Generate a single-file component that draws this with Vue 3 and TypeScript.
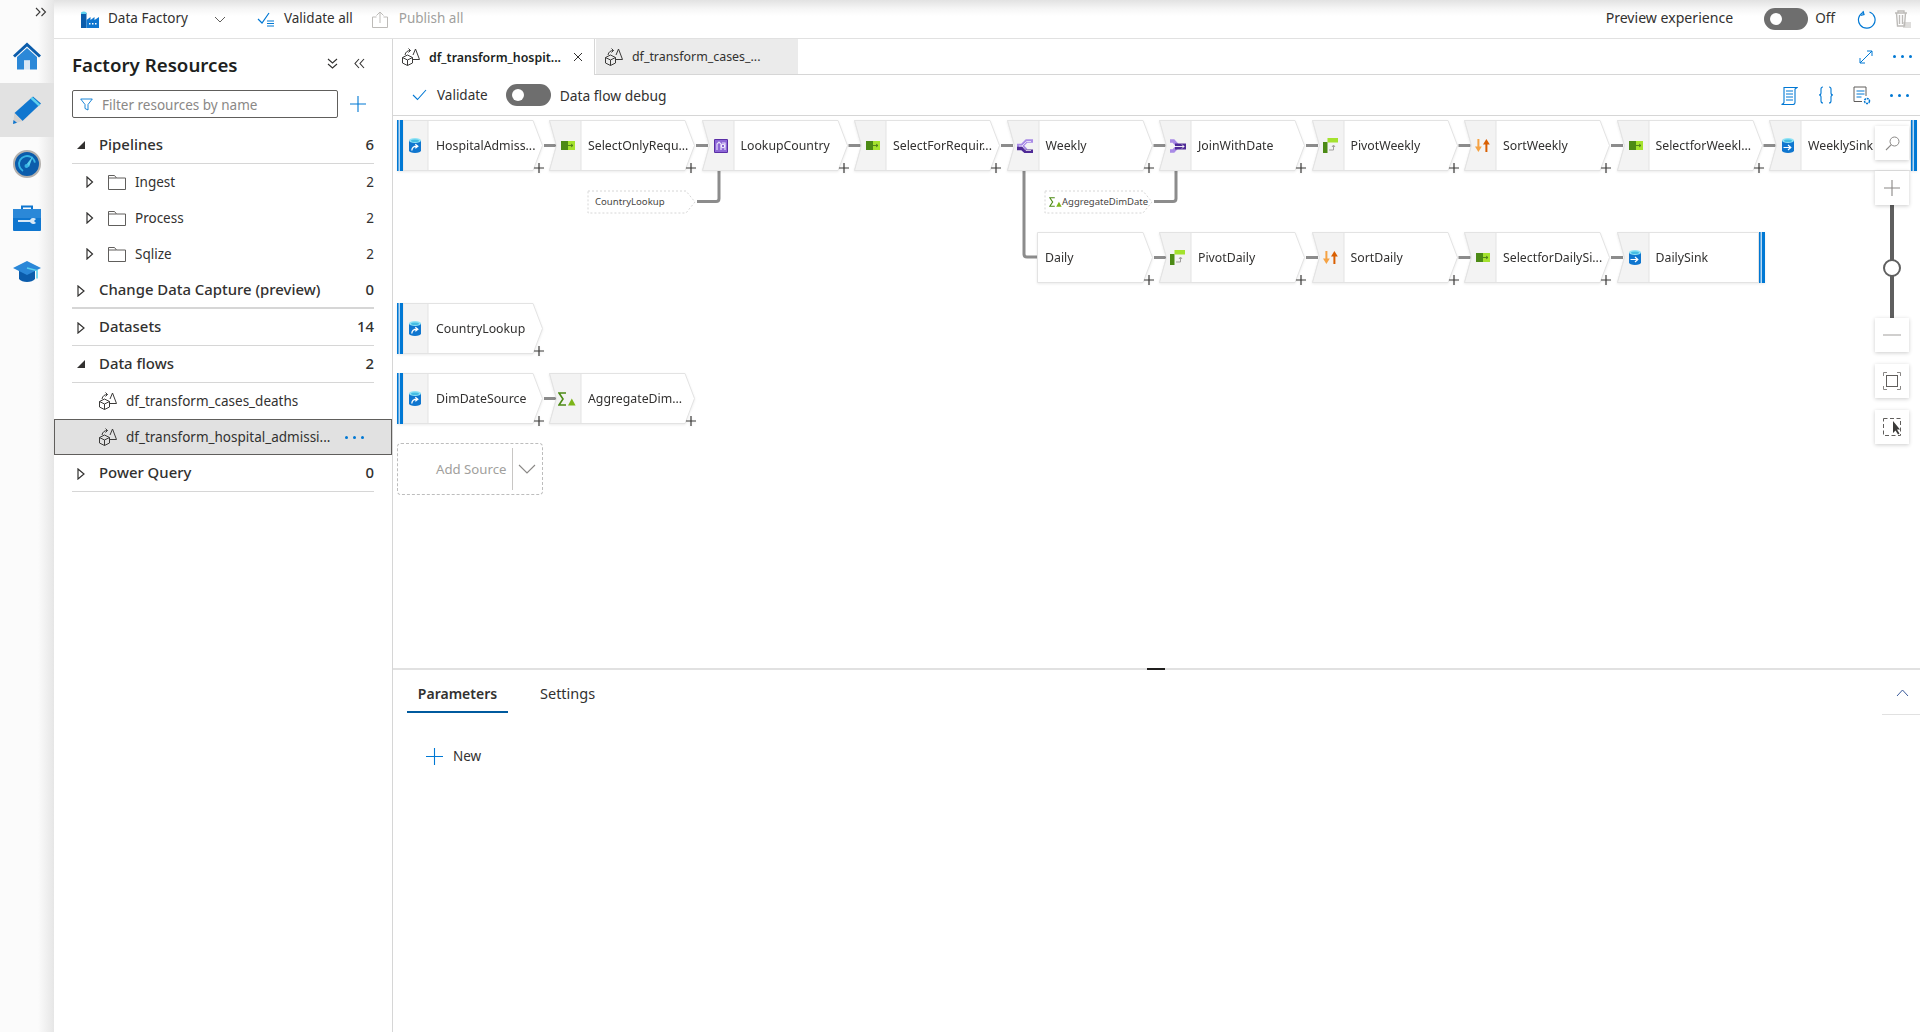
<script setup lang="ts">
type Kind = 'source' | 'step' | 'sink' | 'plain'
interface FlowNode {
  x: number
  y: number
  label: string
  icon: string
  kind: Kind
  link?: boolean
}

const ox = 393
const oy = 116
const step = 152.5

const nodes: FlowNode[] = [
  { x: 397, y: 120, label: 'HospitalAdmiss...', icon: 'i-source', kind: 'source', link: true },
  { x: 549, y: 120, label: 'SelectOnlyRequ...', icon: 'i-select', kind: 'step', link: true },
  { x: 549 + step, y: 120, label: 'LookupCountry', icon: 'i-lookup', kind: 'step', link: true },
  { x: 549 + step * 2, y: 120, label: 'SelectForRequir...', icon: 'i-select', kind: 'step', link: true },
  { x: 549 + step * 3, y: 120, label: 'Weekly', icon: 'i-branch', kind: 'step', link: true },
  { x: 549 + step * 4, y: 120, label: 'JoinWithDate', icon: 'i-join', kind: 'step', link: true },
  { x: 549 + step * 5, y: 120, label: 'PivotWeekly', icon: 'i-pivot', kind: 'step', link: true },
  { x: 549 + step * 6, y: 120, label: 'SortWeekly', icon: 'i-sort', kind: 'step', link: true },
  { x: 549 + step * 7, y: 120, label: 'SelectforWeekl...', icon: 'i-select', kind: 'step', link: true },
  { x: 549 + step * 8, y: 120, label: 'WeeklySink', icon: 'i-sink', kind: 'sink' },
  { x: 1037, y: 232, label: 'Daily', icon: '', kind: 'plain', link: true },
  { x: 549 + step * 4, y: 232, label: 'PivotDaily', icon: 'i-pivot', kind: 'step', link: true },
  { x: 549 + step * 5, y: 232, label: 'SortDaily', icon: 'i-sort', kind: 'step', link: true },
  { x: 549 + step * 6, y: 232, label: 'SelectforDailySi...', icon: 'i-select', kind: 'step', link: true },
  { x: 549 + step * 7, y: 232, label: 'DailySink', icon: 'i-sink', kind: 'sink' },
  { x: 397, y: 303, label: 'CountryLookup', icon: 'i-source', kind: 'source' },
  { x: 397, y: 373, label: 'DimDateSource', icon: 'i-source', kind: 'source', link: true },
  { x: 549, y: 373, label: 'AggregateDim...', icon: 'i-agg', kind: 'step' }
]

const iconSize: Record<string, [number, number, number]> = {
  'i-source': [12, 15, 12],
  'i-sink': [12, 15, 12.5],
  'i-select': [14, 9, 12],
  'i-lookup': [14, 14, 12],
  'i-branch': [16, 14, 10.5],
  'i-join': [16, 14, 10.5],
  'i-pivot': [15, 15, 11],
  'i-sort': [15, 13, 11],
  'i-agg': [18, 14, 9]
}

function iconStyle(n: FlowNode) {
  const [w, h, l] = iconSize[n.icon]
  return { left: `${l}px`, top: `${25.5 - h / 2}px`, width: `${w}px`, height: `${h}px` }
}

function nodeWidth(n: FlowNode): number {
  if (n.kind === 'plain') return 116
  if (n.kind === 'sink') return 142
  return 146
}

function shape(n: FlowNode): string {
  const w = nodeWidth(n)
  if (n.kind === 'sink') return `0.5,0.5 ${w - 0.5},0.5 ${w - 0.5},50.5 0.5,50.5 7.5,25.5`
  if (n.kind === 'source' || n.kind === 'plain') return `0.5,0.5 ${w - 10},0.5 ${w - 0.5},25.5 ${w - 10},50.5 0.5,50.5`
  return `0.5,0.5 ${w - 10},0.5 ${w - 0.5},25.5 ${w - 10},50.5 0.5,50.5 7.5,25.5`
}

function cell(n: FlowNode): string {
  if (n.kind === 'source') return '6,0.5 31,0.5 31,50.5 6,50.5'
  return '0.5,0.5 32,0.5 32,50.5 0.5,50.5 7.5,25.5'
}

const nodeStyle = (n: FlowNode) => ({
  left: `${n.x - ox}px`,
  top: `${n.y - oy}px`,
  width: `${nodeWidth(n) + (n.kind === 'sink' ? 6 : 0)}px`
})

const links = nodes
  .filter((n) => n.link)
  .map((n) => {
    const x = n.x - ox + nodeWidth(n) + 1
    const y = n.y - oy + 25.5
    return `M${x} ${y}H${x + 12}`
  })

const elbows = [
  'M304 85.5H323Q326 85.5 326 82.5V55',
  'M761 85.5H780Q783 85.5 783 82.5V55',
  'M631 55V138Q631 141 634 141H645'
]

const rail = ['i-home', 'i-pencil', 'i-monitor', 'i-tools', 'i-cap']

const groups = [
  { name: 'Pipelines', count: '6', open: true, kids: [
    { name: 'Ingest', count: '2' }, { name: 'Process', count: '2' }, { name: 'Sqlize', count: '2' }
  ] },
  { name: 'Change Data Capture (preview)', count: '0', open: false, kids: [], heavy: true },
  { name: 'Datasets', count: '14', open: false, kids: [] },
  { name: 'Data flows', count: '2', open: true, kids: [], flows: true },
  { name: 'Power Query', count: '0', open: false, kids: [] }
]
</script>

<template>
  <div class="page">
    <svg class="sheet" aria-hidden="true">
      <symbol id="i-flow" viewBox="0 0 18 18">
        <g fill="none" stroke="#3b3a39" stroke-width="1">
          <path d="M0.500 9.500L5.500 7l5 2.500V15l-5 2.500L0.500 15zM0.500 9.500l5 2.500 5-2.500M5.500 12v5.500" />
          <path d="M11 11.500h6.500L13.500 1 11 7" />
          <path d="M3 7C3.500 4 5.500 2.500 8.500 2.500M6.500 0.500l2 2-2 2" />
        </g>
      </symbol>
      <symbol id="i-source" viewBox="0 0 12 15">
        <path d="M0 2.500V12.500A6 2.500 0 0 0 12 12.500V2.500z" fill="#0f76cf" />
        <ellipse cx="6" cy="2.500" rx="6" ry="2.500" fill="#8fe3f5" />
        <ellipse cx="6" cy="2.700" rx="4" ry="1.300" fill="#45bde3" />
        <path d="M2.800 12.500C3 9.800 5 8.200 8 8.200M6.300 6.200L8.800 8.200 6.300 10.200" fill="none" stroke="#fff" stroke-width="1.300" />
      </symbol>
      <symbol id="i-sink" viewBox="0 0 12 15">
        <path d="M0 2.500V12.500A6 2.500 0 0 0 12 12.500V2.500z" fill="#0f76cf" />
        <ellipse cx="6" cy="2.500" rx="6" ry="2.500" fill="#8fe3f5" />
        <ellipse cx="6" cy="2.700" rx="4" ry="1.300" fill="#45bde3" />
        <path d="M1.500 9.500h7M6 7l2.800 2.500L6 12" fill="none" stroke="#fff" stroke-width="1.200" />
      </symbol>
      <symbol id="i-select" viewBox="0 0 14 9">
        <rect width="7" height="9" fill="#4c8a15" />
        <rect x="7" width="7" height="9" fill="#a4e22e" />
        <path d="M7 4.500h5M10 3l2 1.500-2 1.500" fill="none" stroke="#4c7a1a" stroke-width="0.900" />
      </symbol>
      <symbol id="i-lookup" viewBox="0 0 14 14">
        <rect width="14" height="14" rx="1" fill="#5a2ea6" />
        <rect x="1" y="1" width="12" height="12" fill="#8d67d6" />
        <path d="M3 11V5l2-2 2 2v6M8 4h3v7" fill="none" stroke="#e7defa" stroke-width="1.200" />
        <circle cx="9" cy="7" r="1.800" fill="none" stroke="#fff" stroke-width="0.900" />
      </symbol>
      <symbol id="i-branch" viewBox="0 0 16 14">
        <g fill="none" stroke-width="3.600">
          <path d="M0 6.500H5L9.500 2H16" stroke="#a98be6" />
          <path d="M5 7L9 11" stroke="#a98be6" />
          <path d="M0 9.500H5L8 12.200H16" stroke="#4f2a96" />
        </g>
        <path d="M2 7h3L9.500 2.500H14M5 7L9 11.500H14" fill="none" stroke="#fff" stroke-width="0.700" />
      </symbol>
      <symbol id="i-join" viewBox="0 0 16 14">
        <g fill="none" stroke="#a98be6" stroke-width="3.600">
          <path d="M0 2H3.500L8 7" />
          <path d="M0 12H3.500L8 7" />
        </g>
        <path d="M5 4.500h11v6H5z" fill="#4f2a96" />
        <path d="M4 7.500h10M12 5.500l2 2-2 2" fill="none" stroke="#fff" stroke-width="0.900" />
      </symbol>
      <symbol id="i-pivot" viewBox="0 0 15 15">
        <rect x="0" y="4" width="4.500" height="11" fill="#4c8a15" />
        <rect x="4.500" y="0" width="10.500" height="4.500" fill="#a4e22e" />
        <path d="M6 12h4.500V7.500M9 9l1.500-2 1.500 2" fill="none" stroke="#a19f9d" stroke-width="1" />
      </symbol>
      <symbol id="i-sort" viewBox="0 0 15 13">
        <path d="M3.400 0v9" fill="none" stroke="#f5a243" stroke-width="2" />
        <path d="M0 7.500h6.800L3.400 13z" fill="#f5a243" />
        <path d="M11.400 13V4" fill="none" stroke="#d95f02" stroke-width="2" />
        <path d="M8 5.500h6.800L11.400 0z" fill="#d95f02" />
      </symbol>
      <symbol id="i-agg" viewBox="0 0 18 14">
        <path d="M8 1H1l4 6-4 6h7" fill="none" stroke="#4c8a15" stroke-width="1.600" />
        <path d="M10 13.500l3.800-7 3.800 7z" fill="#7cb518" />
      </symbol>
      <symbol id="i-home" viewBox="0 0 28 27">
        <path d="M14 0L0 13l2 2L14 4l12 11 2-2z" fill="#0b5cab" />
        <path d="M4 14.500L14 5.500l10 9V27h-7v-9h-6v9H4z" fill="#2b88d8" />
        <rect x="11" y="18" width="6" height="9" fill="#d9e7f5" />
      </symbol>
      <symbol id="i-pencil" viewBox="0 0 28 28">
        <path d="M20 0.500L28 7.500 9.500 25 1.500 17z" fill="#0f76cf" />
        <path d="M17.500 2.800l8 7.400 1.800-1.800-8-7.400z" fill="#5cd0ee" />
        <path d="M1.500 17L0 28l9.500-3z" fill="#d2d0ce" />
        <path d="M0.500 24L0 28l4-1.300z" fill="#0f76cf" />
      </symbol>
      <symbol id="i-monitor" viewBox="0 0 28 28">
        <circle cx="14" cy="14" r="13" fill="#0b5cab" stroke="#b3b0ad" stroke-width="2" />
        <circle cx="14" cy="14" r="8" fill="none" stroke="#37b3e4" stroke-width="1.800" stroke-dasharray="32 20" transform="rotate(120 14 14)" />
        <path d="M13 15L20 6l-4 11z" fill="#5cd0ee" />
        <circle cx="13.500" cy="16" r="2" fill="#37b3e4" />
      </symbol>
      <symbol id="i-tools" viewBox="0 0 28 28">
        <path d="M8 6V1.500h12V6h-2V3.500h-8V6z" fill="#0f76cf" />
        <rect y="5" width="28" height="22" rx="1" fill="#0f76cf" />
        <rect y="5" width="28" height="9" fill="#2b88d8" />
        <path d="M5 16h12a4 4 0 0 1 6-1l-2 2 2 2a4 4 0 0 1-6-1H5z" fill="#d8e8f6" />
      </symbol>
      <symbol id="i-cap" viewBox="0 0 28 22">
        <path d="M6 10v8c3 4 13 4 16 0v-8z" fill="#0b5cab" />
        <path d="M14 0L0 7l14 7 14-7z" fill="#2b88d8" />
        <path d="M14 7l10 2.500v8" fill="none" stroke="#5cd0ee" stroke-width="1.600" />
      </symbol>
    </svg>

    <nav class="rail">
      <svg class="expand" viewBox="0 0 12 10" width="12" height="10">
        <path d="M1 1l4 4-4 4M6.500 1l4 4-4 4" fill="none" stroke="#3b3a39" stroke-width="1.100" />
      </svg>
      <div v-for="(r, i) in rail" :key="r" class="rail-item" :class="{ on: i === 1 }">
        <svg width="28" height="28"><use :href="'#' + r" /></svg>
      </div>
    </nav>

    <div class="main">
      <header class="topbar">
        <svg class="tb-ic" width="18" height="17" viewBox="0 0 18 17">
          <path d="M0 2h5.500v15H0z" fill="#0b5cab" />
          <path d="M0 1.500q2.700-2 5.500 0V3H0z" fill="#5cd0ee" />
          <path d="M5.500 9l4-3v3l4-3v3l4.500-3v11H5.500z" fill="#0f76cf" />
          <path d="M8 12h1.500v1.500H8zM11 12h1.500v1.500H11zM14 12h1.500v1.500H14z" fill="#fff" />
        </svg>
        <span class="tb-text df">Data Factory</span>
        <svg class="tb-chev" width="12" height="7" viewBox="0 0 12 7"><path d="M1 1l5 5 5-5" fill="none" stroke="#605e5c" /></svg>
        <svg class="tb-val" width="18" height="15" viewBox="0 0 18 15">
          <path d="M1 7l4 4 7-10" fill="none" stroke="#0078d4" stroke-width="1.200" />
          <path d="M10 9h7M10 11.500h7M10 14h7" stroke="#0078d4" stroke-width="1.200" />
        </svg>
        <span class="tb-text va">Validate all</span>
        <svg class="tb-pub" width="16" height="17" viewBox="0 0 16 17">
          <path d="M4.500 6H.5v10.500h15V6h-4M8 12V1M4.500 4.500L8 1l3.500 3.500" fill="none" stroke="#bdbbb8" />
        </svg>
        <span class="tb-text muted">Publish all</span>
        <span class="spacer"></span>
        <span class="tb-text pv">Preview experience</span>
        <span class="toggle wide"><i></i></span>
        <span class="tb-text off">Off</span>
        <svg class="tb-ref" width="19" height="19" viewBox="0 0 19 19">
          <path d="M6.500 2.200A8.300 8.300 0 1 0 12.500 2" fill="none" stroke="#0078d4" stroke-width="1.200" />
          <path d="M6 1l1 3.500-3.500 .8" fill="none" stroke="#0078d4" stroke-width="1.200" />
        </svg>
        <svg class="tb-trash" width="17" height="18" viewBox="0 0 17 18">
          <path d="M1 3h12M4 3V1h6v2M2.500 3l1 13h7l1-13M5.500 5v9M8.500 5v9" fill="none" stroke="#bdbbb8" stroke-width="1.400" />
          <path d="M9 13h8M9 15h8M9 17h8" stroke="#bdbbb8" />
        </svg>
      </header>

      <div class="body">
        <aside class="panel">
          <div class="panel-head">
            <h1>Factory Resources</h1>
            <svg class="hd-a" width="11" height="11" viewBox="0 0 11 11"><path d="M1 1l4.500 4L10 1M1 6l4.500 4L10 6" fill="none" stroke="#323130" stroke-width="1.100" /></svg>
            <svg class="hd-b" width="11" height="11" viewBox="0 0 11 11"><path d="M5 1L1 5.500 5 10M10 1L6 5.500 10 10" fill="none" stroke="#323130" stroke-width="1.100" /></svg>
          </div>
          <div class="filter-row">
            <div class="filter">
              <svg width="13" height="13" viewBox="0 0 13 13"><path d="M.7 1h11.600L8 6.500V12L5 10.500v-4z" fill="none" stroke="#0078d4" stroke-width="0.900" /></svg>
              <span>Filter resources by name</span>
            </div>
            <svg class="add" width="18" height="18" viewBox="0 0 18 18"><path d="M9 1v16M1 9h16" stroke="#0078d4" stroke-width="1.100" /></svg>
          </div>

          <template v-for="g in groups" :key="g.name">
            <div class="group" :class="{ heavy: g.heavy }">
              <svg v-if="g.open" class="tri" width="10" height="10" viewBox="0 0 10 10"><path d="M9 1v8H1z" fill="#323130" /></svg>
              <svg v-else class="tri" width="10" height="12" viewBox="0 0 10 12"><path d="M2 1l6 5-6 5z" fill="none" stroke="#323130" stroke-width="1.200" /></svg>
              <span class="g-name">{{ g.name }}</span>
              <span class="g-count">{{ g.count }}</span>
            </div>
            <div v-for="k in g.kids" :key="k.name" class="kid">
              <svg class="kid-tri" width="8" height="12" viewBox="0 0 8 12"><path d="M1 1l5.500 5L1 11z" fill="none" stroke="#323130" stroke-width="1.200" /></svg>
              <svg class="folder" width="18" height="16" viewBox="0 0 18 16"><path d="M.5 15.500V1.500h6l2 2.500h9v11.500zM.5 4h8" fill="none" stroke="#605e5c" /></svg>
              <span class="k-name">{{ k.name }}</span>
              <span class="k-count">{{ k.count }}</span>
            </div>
            <template v-if="g.flows">
              <div class="flow">
                <svg width="18" height="18"><use href="#i-flow" /></svg>
                <span>df_transform_cases_deaths</span>
              </div>
              <div class="flow sel">
                <svg width="18" height="18"><use href="#i-flow" /></svg>
                <span>df_transform_hospital_admissi...</span>
                <em class="dots"><i></i><i></i><i></i></em>
              </div>
            </template>
          </template>
        </aside>

        <section class="editor">
          <div class="tabs">
            <div class="tab active">
              <svg width="18" height="18"><use href="#i-flow" /></svg>
              <span>df_transform_hospit...</span>
              <svg class="close" width="10" height="10" viewBox="0 0 10 10"><path d="M1 1l8 8M9 1l-8 8" stroke="#323130" /></svg>
            </div>
            <div class="tab idle">
              <svg width="18" height="18"><use href="#i-flow" /></svg>
              <span>df_transform_cases_...</span>
            </div>
            <span class="spacer"></span>
            <svg class="t-exp" width="14" height="14" viewBox="0 0 14 14"><path d="M1 13L13 1M8 1h5v5M1 8v5h5" fill="none" stroke="#0078d4" /></svg>
            <em class="dots t-dots"><i></i><i></i><i></i></em>
          </div>

          <div class="toolbar">
            <svg class="v-ic" width="15" height="12" viewBox="0 0 15 12"><path d="M1 6l4.500 4.500L14 1" fill="none" stroke="#0078d4" stroke-width="1.100" /></svg>
            <span class="v-text">Validate</span>
            <span class="toggle"><i></i></span>
            <span class="d-text">Data flow debug</span>
            <span class="spacer"></span>
            <svg class="tl-a" width="18" height="19" viewBox="0 0 18 19">
              <path d="M4 14V1.500h13L15 3v13.500q0 2-2 2H1.500q2-.5 2.500-2zM6 5h7M6 8h7M6 11h7M6 14h7" fill="none" stroke="#0078d4" stroke-width="1.100" />
            </svg>
            <svg class="tl-b" width="16" height="18" viewBox="0 0 16 18">
              <path d="M5 1Q3 1 3 3v4Q3 9 1 9q2 0 2 2v4q0 2 2 2M11 1q2 0 2 2v4q0 2 2 2-2 0-2 2v4q0 2-2 2" fill="none" stroke="#0078d4" stroke-width="1.100" />
            </svg>
            <svg class="tl-c" width="18" height="19" viewBox="0 0 18 19">
              <path d="M9 15.500H1V1h12v9" fill="none" stroke="#605e5c" />
              <path d="M3.500 5h8M3.500 8h8M3.500 11h5" stroke="#0078d4" />
              <circle cx="14" cy="15" r="2.500" fill="none" stroke="#0078d4" stroke-width="1.500" stroke-dasharray="2 .8" />
            </svg>
            <em class="dots tl-dots"><i></i><i></i><i></i></em>
          </div>

          <div class="canvas">
            <svg class="wires" width="1527" height="552">
              <path v-for="(d, i) in links" :key="i" :d="d" />
              <path v-for="e in elbows" :key="e" :d="e" />
            </svg>

            <div v-for="n in nodes" :key="n.label" class="node" :style="nodeStyle(n)">
              <svg class="shape" :width="nodeWidth(n)" height="51">
                <polygon :points="shape(n)" fill="#fff" stroke="#e3e3e3" />
                <polygon v-if="n.kind !== 'plain'" :points="cell(n)" fill="#f3f3f3" stroke="#e3e3e3" />
              </svg>
              <i v-if="n.kind === 'source'" class="stripe left"></i>
              <i v-if="n.kind === 'sink'" class="stripe right"></i>
              <svg v-if="n.icon" class="n-icon" :style="iconStyle(n)">
                <use :href="'#' + n.icon" />
              </svg>
              <span class="label" :class="{ plainlabel: n.kind === 'plain' }">{{ n.label }}</span>
              <svg v-if="n.kind !== 'sink'" class="plus" width="10" height="10" viewBox="0 0 10 10"><path d="M5 0v10M0 5h10" stroke="#3b3a39" stroke-width="1.200" /></svg>
            </div>

            <div class="ghost g1">
              <svg width="109" height="24"><polygon points="1,1 99,1 108,12 99,23 1,23" fill="#fff" stroke="#d6d6d6" stroke-dasharray="2 2" /></svg>
              <span>CountryLookup</span>
            </div>
            <div class="ghost g2">
              <svg width="109" height="24"><polygon points="1,1 99,1 108,12 99,23 1,23" fill="#fff" stroke="#d6d6d6" stroke-dasharray="2 2" /></svg>
              <svg class="g-ic" width="13" height="10"><use href="#i-agg" /></svg>
              <span class="shift">AggregateDimDate</span>
            </div>

            <div class="addsrc">
              <span>Add Source</span>
              <i></i>
              <svg width="18" height="10" viewBox="0 0 18 10"><path d="M1 1l8 8 8-8" fill="none" stroke="#8a8886" stroke-width="1.100" /></svg>
            </div>

            <div class="zoomer">
              <button class="zb"><svg width="15" height="15" viewBox="0 0 15 15"><circle cx="9.500" cy="5.500" r="4.500" fill="none" stroke="#8a8886" /><path d="M6.300 8.700L1 14" stroke="#8a8886" stroke-width="1.100" /></svg></button>
              <button class="zb gap-top"><svg width="16" height="16" viewBox="0 0 16 16"><path d="M8 0v16M0 8h16" stroke="#8a8886" stroke-width="1.100" /></svg></button>
              <div class="track"><b></b></div>
              <button class="zb"><svg width="18" height="2" viewBox="0 0 18 2"><path d="M0 1h18" stroke="#a19f9d" /></svg></button>
              <button class="zb gap-top2"><svg width="18" height="18" viewBox="0 0 18 18"><path d="M.5 4V.5H4M14 .5h3.500V4M17.500 14v3.500H14M4 17.500H.5V14" fill="none" stroke="#8a8886" /><rect x="3.500" y="3.500" width="11" height="11" fill="none" stroke="#605e5c" /></svg></button>
              <button class="zb gap-top2"><svg width="18" height="18" viewBox="0 0 18 18"><rect x=".5" y=".5" width="17" height="17" fill="none" stroke="#605e5c" stroke-dasharray="4 2.500" /><path d="M10 3v12l2.500-2.500 2.500 4 1.500-1-2.500-4H17z" fill="#3b3a39" /></svg></button>
            </div>
          </div>

          <div class="split"><i></i></div>

          <div class="bottom">
            <div class="b-tabs">
              <span class="b-tab on">Parameters</span>
              <span class="b-tab">Settings</span>
              <span class="spacer"></span>
              <svg class="b-up" width="13" height="8" viewBox="0 0 13 8"><path d="M1 7l5.500-6L12 7" fill="none" stroke="#3a5a9a" /></svg>
              <i class="b-rule"></i>
            </div>
            <div class="new">
              <svg width="17" height="17" viewBox="0 0 17 17"><path d="M8.500 0v17M0 8.500h17" stroke="#0078d4" stroke-width="1.100" /></svg>
              <span>New</span>
            </div>
          </div>
        </section>
      </div>
    </div>
  </div>
</template>

<style>
html, body { margin: 0; background: #fff; }
</style>

<style scoped>
.page {
  display: flex;
  width: 1920px;
  height: 1032px;
  overflow: hidden;
  background: #fff;
  color: #323130;
  font-family: "Noto Sans", "Open Sans", sans-serif;
  font-size: 13.5px;
}
.sheet { position: absolute; width: 0; height: 0; }
.spacer { flex: 1; }
i, em { display: block; font-style: normal; }

.rail {
  flex: 0 0 54px;
  position: relative;
  padding-top: 29px;
  box-sizing: border-box;
  background: linear-gradient(90deg, #fbfbfb 0, #fbfbfb 38px, #e6e6e6 54px);
}
.expand { position: absolute; left: 35px; top: 7px; }
.rail-item {
  height: 54px;
  display: flex;
  align-items: center;
  justify-content: center;
}
.rail-item.on { background: #e2e2e2; }

.main { flex: 1; display: flex; flex-direction: column; min-width: 0; }

.topbar {
  height: 38px;
  flex: none;
  display: flex;
  align-items: center;
  border-bottom: 1px solid #e1e1e1;
  background: linear-gradient(180deg, #e2e2e2 0, #f6f6f6 9px, #fff 16px);
}
.tb-text { font-size: 13.5px; color: #323130; white-space: nowrap; position: relative; top: -1px; }
.tb-ic { margin-left: 27px; }
.df { margin-left: 9px; }
.tb-chev { margin-left: 26px; }
.tb-val { margin-left: 31px; }
.va { margin-left: 9px; }
.tb-pub { margin-left: 19px; }
.muted { margin-left: 11px; color: #a19f9d; }
.pv { margin-right: 31px; font-size: 14.100px; top: -2px; }
.off { margin-left: 7px; margin-right: 22px; }
.tb-ref { margin-right: 18px; }
.tb-trash { margin-right: 9px; }

.toggle {
  display: block;
  width: 44px;
  height: 22px;
  border-radius: 11px;
  background: #6e6e6e;
  position: relative;
  flex: none;
}
.toggle i {
  position: absolute;
  left: 6px;
  top: 5px;
  width: 12px;
  height: 12px;
  border-radius: 50%;
  background: #fff;
}

.body { flex: 1; display: flex; min-height: 0; }

.panel {
  flex: 0 0 339px;
  box-sizing: border-box;
  padding: 0 18px;
  border-right: 1px solid #d6d6d6;
}
.panel-head {
  height: 51px;
  display: flex;
  align-items: center;
}
.panel-head h1 {
  margin: 0;
  flex: 1;
  font-size: 18.700px;
  font-weight: 600;
  color: #201f1e;
}
.hd-a { margin-right: 16px; margin-bottom: 3px; }
.hd-b { margin-right: 9px; margin-bottom: 3px; }
.filter-row { display: flex; align-items: center; height: 28px; margin-bottom: 9px; }
.filter {
  width: 266px;
  height: 28px;
  box-sizing: border-box;
  border: 1px solid #605e5c;
  border-radius: 2px;
  display: flex;
  align-items: center;
  padding-left: 7px;
  color: #8a8886;
}
.filter span { margin-left: 9px; position: relative; top: 1px; }
.add { margin-left: 11px; }

.group {
  height: 37px;
  box-sizing: border-box;
  border-bottom: 1px solid #d6d6d6;
  display: flex;
  align-items: center;
  position: relative;
  font-weight: 500;
  font-size: 14.900px;
  padding-left: 27px;
  color: #323130;
}
.group.heavy { border-bottom-width: 2px; }
.tri { position: absolute; left: 4px; top: 13px; }
.g-name { flex: 1; position: relative; top: -1px; }
.g-count { position: relative; top: -1px; }
.kid, .flow {
  height: 36px;
  display: flex;
  align-items: center;
  position: relative;
}
.kid-tri { position: absolute; left: 14px; top: 12px; }
.folder { margin-left: 36px; }
.k-name { margin-left: 9px; flex: 1; }
.flow { padding-left: 27px; }
.flow span { margin-left: 9px; }
.flow.sel {
  margin: 0 -18px;
  padding-left: 44px;
  background: #e1e1e1;
  border: 1px solid #605e5c;
  box-sizing: border-box;
}
.dots { display: flex; gap: 5px; }
.dots i { width: 3px; height: 3px; border-radius: 50%; background: #0078d4; }
.flow.sel .dots { margin-left: 15px; }

.editor { flex: 1; display: flex; flex-direction: column; min-width: 0; }

.tabs {
  height: 36px;
  flex: none;
  box-sizing: border-box;
  border-bottom: 1px solid #d6d6d6;
  display: flex;
  align-items: stretch;
}
.tab {
  width: 202px;
  box-sizing: border-box;
  display: flex;
  align-items: center;
  padding-left: 9px;
}
.tab span { margin-left: 9px; white-space: nowrap; font-size: 12.400px; }
.tab.active { font-weight: 600; color: #201f1e; border-right: 1px solid #d6d6d6; background: #fff; height: 36px; }
.tab.idle { background: #ebebeb; margin-left: 1px; padding-left: 9px; }
.close { margin-left: 12px; }
.t-exp { align-self: center; margin-right: 20px; }
.t-dots { align-self: center; margin-right: 8px; }

.toolbar {
  height: 41px;
  flex: none;
  box-sizing: border-box;
  border-bottom: 1px solid #d6d6d6;
  display: flex;
  align-items: center;
}
.v-ic { margin-left: 19px; }
.v-text { margin-left: 10px; }
.toolbar .toggle { margin-left: 18px; margin-right: 8px; width: 45px; }
.d-text { font-size: 13.800px; margin-left: 1px; }
.tl-a { margin-right: 20px; }
.tl-b { margin-right: 19px; }
.tl-c { margin-right: 19.500px; }
.tl-dots { margin-right: 11px; }

.canvas { flex: 1; position: relative; overflow: hidden; min-height: 0; }
.wires { position: absolute; left: 0; top: 0; }
.wires path { fill: none; stroke: #8c8c8c; stroke-width: 3; }

.node { position: absolute; height: 51px; filter: drop-shadow(0 1px 1px rgba(0, 0, 0, .08)); }
.shape { position: absolute; left: 0; top: 0; }
.stripe { position: absolute; top: 0; height: 51px; background: #0078d4; }
.stripe.left { left: 0; width: 6px; box-shadow: inset 1.500px 0 0 #0078d4, inset 3px 0 0 #b7d9f3; }
.stripe.right { left: 142px; width: 6px; box-shadow: inset 1.500px 0 0 #0078d4, inset 3px 0 0 #b7d9f3; }
.n-icon { position: absolute; }
.label {
  position: absolute;
  left: 39px;
  top: 0;
  line-height: 51px;
  font-size: 12.300px;
  color: #323130;
  white-space: nowrap;
}
.label.plainlabel { left: 8px; }
.plus { position: absolute; right: -1px; bottom: -2px; }

.ghost { position: absolute; top: 74px; width: 109px; height: 24px; font-size: 9.600px; color: #484644; }
.ghost svg { position: absolute; left: 0; top: 0; }
.ghost span { position: absolute; left: 8px; top: 0; line-height: 24px; white-space: nowrap; }
.ghost .shift { left: 18px; font-size: 9.500px; }
.ghost .g-ic { left: 5px; top: 7px; }
.g1 { left: 194px; }
.g2 { left: 651px; }

.addsrc {
  position: absolute;
  left: 4px;
  top: 327px;
  width: 146px;
  height: 52px;
  box-sizing: border-box;
  border: 1px dashed #bdbdbd;
  border-radius: 4px;
  color: #a19f9d;
  font-size: 13.200px;
  display: flex;
  align-items: center;
}
.addsrc span { margin-left: 38px; }
.addsrc i { width: 1px; height: 42px; background: #c8c6c4; margin-left: 6px; }
.addsrc svg { margin-left: 5px; }

.zoomer { position: absolute; left: 1482px; top: 10px; width: 34px; display: flex; flex-direction: column; }
.zb {
  width: 34px;
  height: 34px;
  flex: none;
  padding: 0;
  border: 0;
  background: #fff;
  box-shadow: 0 1px 4px rgba(0, 0, 0, .2);
  display: flex;
  align-items: center;
  justify-content: center;
  position: relative;
  z-index: 1;
}
.gap-top { margin-top: 11px; }
.gap-top2 { margin-top: 12px; }
.track { height: 113px; width: 4px; margin: 0 auto; background: #5f5f5f; position: relative; }
.track b {
  position: absolute;
  left: -7px;
  top: 54px;
  width: 18px;
  height: 18px;
  box-sizing: border-box;
  background: #fff;
  border: 2px solid #5f5f5f;
  border-radius: 50%;
}

.split { height: 2px; flex: none; background: #e1e1e1; position: relative; }
.split i { position: absolute; left: 754px; top: 0; width: 18px; height: 2px; background: #201f1e; }

.bottom { flex: none; height: 362px; }
.b-tabs { height: 44px; display: flex; align-items: stretch; padding-left: 14px; position: relative; }
.b-tab {
  width: 101px;
  text-align: center;
  line-height: 47px;
  height: 43px;
  font-size: 14px;
  box-sizing: border-box;
}
.b-tab + .b-tab { width: 78px; margin-left: 32px; text-align: left; font-size: 14.500px; }
.b-tab.on { font-weight: 600; border-bottom: 2px solid #005a9e; }
.b-up { align-self: center; margin-right: 11px; margin-top: 2px; }
.b-rule { position: absolute; right: 0; top: 44px; width: 38px; height: 1px; background: #e1e1e1; }
.new { display: flex; align-items: center; margin: 33px 0 0 33px; }
.new span { margin-left: 10px; }
</style>
